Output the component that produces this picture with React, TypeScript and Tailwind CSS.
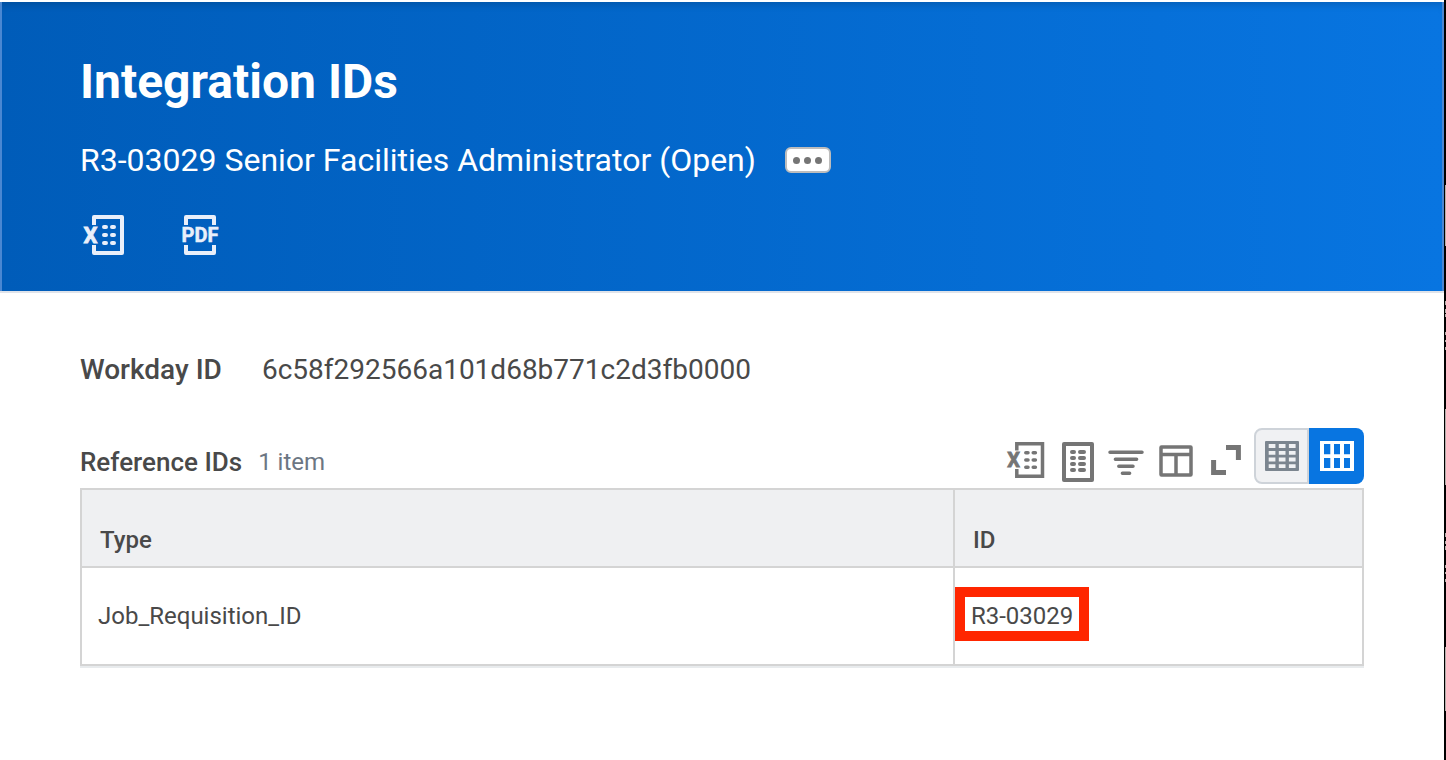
import React from 'react';

interface IconProps {
  className?: string;
}

interface ReferenceRow {
  type: string;
  id: string;
}

const rows: ReferenceRow[] = [{ type: 'Job_Requisition_ID', id: 'R3-03029' }];

const edgeMarks = [
  { start: 185, length: 61 },
  { start: 301, length: 4 },
  { start: 309, length: 4 },
  { start: 314, length: 3 },
  { start: 332, length: 3 },
  { start: 340, length: 2 },
  { start: 347, length: 3 },
  { start: 409, length: 76 },
  { start: 533, length: 4 },
  { start: 541, length: 3 },
  { start: 546, length: 4 },
  { start: 565, length: 3 },
  { start: 572, length: 2 },
  { start: 579, length: 3 },
  { start: 647, length: 64 }
];

function ExportExcelIcon({ className }: IconProps) {
  return (
    <svg className={className} viewBox="0 0 48 40" fill="none" stroke="currentColor" strokeWidth={4}>
      <path strokeLinejoin="round" d="M14 10V2H42V38H14V30" />
      <path strokeLinecap="round" d="M24 12h2M32 12h2M24 20h2M32 20h2M24 28h2M32 28h2" />
      <text x="3.5" y="28" fontSize="22" fontWeight="700" fill="currentColor" strokeWidth={0.8}>X</text>
    </svg>
  );
}

function ExportPdfIcon({ className }: IconProps) {
  return (
    <svg className={className} viewBox="0 0 48 40" fill="none" stroke="currentColor" strokeWidth={4}>
      <path strokeLinejoin="round" d="M10 10V2H38V10M10 30V38H38V30" />
      <text x="24" y="27" textAnchor="middle" fontSize="20" fontWeight="700" fill="currentColor" strokeWidth={0.5}>PDF</text>
    </svg>
  );
}

function GridExcelIcon({ className }: IconProps) {
  return (
    <svg className={className} viewBox="0 0 40 44" fill="none" stroke="currentColor" strokeWidth={3.5}>
      <path d="M10.8 10.5V3.8H36.5V36.3H10.8V29" />
      <path strokeLinecap="round" d="M19.8 12.7h2.2M27.2 12.7h2.2M19.8 19.9h2.2M27.2 19.9h2.2M19.8 27.2h2.2M27.2 27.2h2.2" />
      <text x="1.3" y="27" fontSize="20" fontWeight="700" fill="currentColor" strokeWidth={0.8}>X</text>
    </svg>
  );
}

function WorksheetIcon({ className }: IconProps) {
  return (
    <svg className={className} viewBox="0 0 40 44" fill="none" stroke="currentColor" strokeWidth={4}>
      <rect x="8" y="4" width="28" height="36" strokeLinejoin="round" />
      <path strokeLinecap="round" d="M16 12h2M24 12h4M16 18h2M24 18h4M16 24h2M24 24h4M16 30h2M24 30h4" />
    </svg>
  );
}

function FilterIcon({ className }: IconProps) {
  return (
    <svg className={className} viewBox="0 0 40 44" fill="none" stroke="currentColor" strokeWidth={3.5} strokeLinecap="round">
      <path d="M4 12.3H36M9.4 19.3H30.6M12.8 26.2H27M16.4 33.3H23.6" />
    </svg>
  );
}

function ColumnsIcon({ className }: IconProps) {
  return (
    <svg className={className} viewBox="0 0 40 44" fill="none" stroke="currentColor" strokeWidth={3.5}>
      <rect x="5" y="7" width="30" height="28" rx="0.5" />
      <path d="M5 14.6H35M20 14.6V35" />
    </svg>
  );
}

function ExpandIcon({ className }: IconProps) {
  return (
    <svg className={className} viewBox="0 0 40 44" fill="none" stroke="currentColor" strokeWidth={5}>
      <path d="M20 7.6H32.4V20M7.6 20V32.4H20" />
    </svg>
  );
}

function DenseGridIcon({ className }: IconProps) {
  return (
    <svg className={className} viewBox="0 0 34 30" fill="none">
      <rect width="34" height="30" rx="1" fill="currentColor" />
      <g stroke="#f0f1f3" strokeWidth={3.8} strokeDasharray="6.7 3.4">
        <path d="M3.7 5H30.7M3.7 11.8H30.7M3.7 18.5H30.7M3.7 25.2H30.7" />
      </g>
    </svg>
  );
}

function LooseGridIcon({ className }: IconProps) {
  return (
    <svg className={className} viewBox="0 0 34 30" fill="none">
      <path
        fill="currentColor"
        fillRule="evenodd"
        d="M0 0H34V30H0ZM4 3V13.3H10.3V3ZM14 3V13.3H20V3ZM24 3V13.3H30V3ZM4 17V27H10.3V17ZM14 17V27H20V17ZM24 17V27H30V17Z"
      />
    </svg>
  );
}

const gridActions = [
  { label: 'Export to Excel', Icon: GridExcelIcon },
  { label: 'Worksheets', Icon: WorksheetIcon },
  { label: 'Filter', Icon: FilterIcon },
  { label: 'Column preferences', Icon: ColumnsIcon },
  { label: 'Full screen', Icon: ExpandIcon }
];

export default function App() {
  return (
    <div className="flex min-h-screen bg-white font-['Roboto',sans-serif] text-[#494949]">
      <div className="min-w-0 flex-1 pt-0.5">
        {/* Page header */}
        <header className="border-b-2 border-[#dfe3ea]">
          <div className="border-x-2 border-x-[#4a87d2] bg-linear-to-r from-[#005cb9] to-[#0875e1] text-white shadow-[inset_0_8px_8px_-6px_rgba(0,0,0,0.18)]">
            <div className="px-[78px] pt-[52px] pb-9">
              <h1 className="text-[48px] leading-[56px] font-bold">Integration IDs</h1>
              <div className="mt-[30px] flex items-center gap-[29px]">
                <h2 className="text-[32px] leading-10">R3-03029 Senior Facilities Administrator (Open)</h2>
                <button
                  type="button"
                  aria-label="Related actions"
                  className="flex h-[26px] w-[46px] items-center justify-center gap-1 rounded-md border-2 border-[#bdbdbd] bg-white"
                >
                  <span className="size-[7px] rounded-full bg-[#757575]" />
                  <span className="size-[7px] rounded-full bg-[#757575]" />
                  <span className="size-[7px] rounded-full bg-[#757575]" />
                </button>
              </div>
              <div className="mt-[35px] flex gap-12 text-[#e9effa]">
                <button type="button" aria-label="Export to Excel">
                  <ExportExcelIcon className="h-10 w-12" />
                </button>
                <button type="button" aria-label="View printable version">
                  <ExportPdfIcon className="h-10 w-12" />
                </button>
              </div>
            </div>
          </div>
        </header>

        <main className="px-20 pt-[57px]">
          <dl className="flex gap-10 text-[28px] leading-10">
            <dt className="font-medium">Workday ID</dt>
            <dd>6c58f292566a101d68b771c2d3fb0000</dd>
          </dl>

          {/* Grid title and toolbar */}
          <div className="mt-[38px] flex items-end justify-between">
            <div className="flex items-center gap-4 pb-1.5 leading-8">
              <h3 className="text-[26px] font-medium">Reference IDs</h3>
              <span className="text-[24px] text-[#6c7683]">1 item</span>
            </div>
            <div className="flex items-end gap-2">
              <div className="flex gap-2.5 text-[#757575]">
                {gridActions.map(({ label, Icon }) => (
                  <button key={label} type="button" aria-label={label}>
                    <Icon className="h-11 w-10" />
                  </button>
                ))}
              </div>
              <div className="grid h-14 w-[110px] grid-cols-2">
                <button
                  type="button"
                  aria-label="Compact grid"
                  className="flex items-center justify-center rounded-l-lg border-2 border-[#ced3d9] bg-[#f0f1f3] text-[#7b858f]"
                >
                  <DenseGridIcon className="h-[30px] w-[34px]" />
                </button>
                <button
                  type="button"
                  aria-label="Expanded grid"
                  aria-pressed="true"
                  className="flex items-center justify-center rounded-r-lg bg-[#0875e1] text-white"
                >
                  <LooseGridIcon className="h-[30px] w-[34px]" />
                </button>
              </div>
            </div>
          </div>

          <table className="mt-1 w-full table-fixed border-separate border-spacing-0 border-2 border-[#d4d4d4] text-left text-[24px] leading-8 shadow-[0_2px_0_#e8ebed]">
            <thead>
              <tr className="h-[78px] bg-[#eff0f2]">
                <th className="w-[68.2%] border-r-2 border-b-2 border-[#d4d4d4] px-[18px] pt-6 font-medium">Type</th>
                <th className="border-b-2 border-[#d4d4d4] px-[18px] pt-6 font-medium">ID</th>
              </tr>
            </thead>
            <tbody>
              {rows.map((row) => (
                <tr key={row.id} className="h-24">
                  <td className="border-r-2 border-[#d4d4d4] px-4">{row.type}</td>
                  <td className="px-4">
                    <span className="relative inline-block align-top">
                      {row.id}
                      <span className="absolute -inset-x-4 -top-[13px] h-[54px] border-10 border-[#ff2600]" />
                    </span>
                  </td>
                </tr>
              ))}
            </tbody>
          </table>
        </main>
      </div>

      {/* Window edge */}
      <div className="relative w-0.5 bg-black">
        {edgeMarks.map((mark) => (
          <span key={mark.start} className="absolute right-0 w-px bg-[#b5b0ac]" style={{ top: mark.start, height: mark.length }} />
        ))}
      </div>
    </div>
  );
}
